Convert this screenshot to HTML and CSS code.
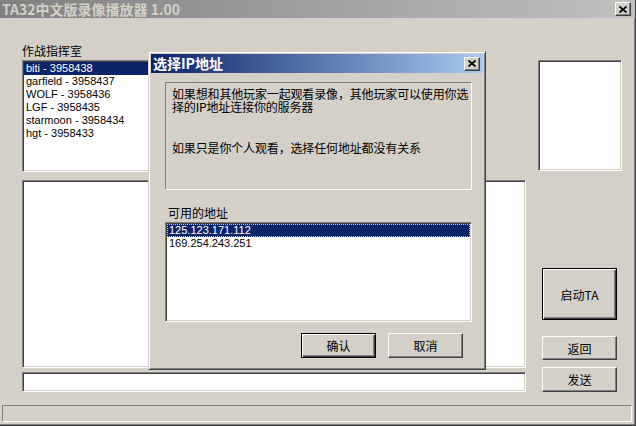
FILE: index.html
```html
<!DOCTYPE html>
<html lang="zh-CN">
<head>
<meta charset="utf-8">
<title>TA32中文版录像播放器 1.00</title>
<link rel="stylesheet" href="styles.css">
</head>
<body>
<div class="window">
  <div class="titlebar">
    <div class="title">TA32中文版录像播放器 1.00</div>
    <div class="tbtn">
      <svg width="8" height="7" viewBox="0 0 8 7"><path d="M0.5 0.5 L7.5 6.5 M7.5 0.5 L0.5 6.5" stroke="#000" stroke-width="1.7" fill="none"/></svg>
    </div>
  </div>
  <div class="client">
    <div class="leftcol">
      <div class="label">作战指挥室</div>
      <div class="sunken list1">
        <div class="item sel">biti - 3958438</div>
        <div class="item">garfield - 3958437</div>
        <div class="item">WOLF - 3958436</div>
        <div class="item">LGF - 3958435</div>
        <div class="item">starmoon - 3958434</div>
        <div class="item">hgt - 3958433</div>
      </div>
      <div class="sunken list2"></div>
      <div class="sunken input"></div>
    </div>
    <div class="rightcol">
      <div class="sunken preview"></div>
      <div class="btn default btn-start">启动TA</div>
      <div class="btn btn-back">返回</div>
      <div class="btn btn-send">发送</div>
    </div>
  </div>
  <div class="status"></div>

  <div class="dialog">
    <div class="dtitle">
      <span class="dtitle-text">选择IP地址</span>
      <div class="tbtn">
        <svg width="8" height="7" viewBox="0 0 8 7"><path d="M0.5 0.5 L7.5 6.5 M7.5 0.5 L0.5 6.5" stroke="#000" stroke-width="1.7" fill="none"/></svg>
      </div>
    </div>
    <div class="dbody">
      <div class="infobox">
        <p class="para">如果想和其他玩家一起观看录像，其他玩家可以使用你选<br>择的IP地址连接你的服务器</p>
        <p class="para para2">如果只是你个人观看，选择任何地址都没有关系</p>
      </div>
      <div class="dlabel">可用的地址</div>
      <div class="sunken dlist">
        <div class="item sel focus">125.123.171.112</div>
        <div class="item">169.254.243.251</div>
      </div>
      <div class="dbuttons">
        <div class="btn default dbtn">确认</div>
        <div class="btn dbtn">取消</div>
      </div>
    </div>
  </div>
</div>
</body>
</html>
```
FILE: styles.css
```css
* { box-sizing: border-box; }
html, body { margin: 0; padding: 0; }
body {
  width: 636px;
  height: 426px;
  overflow: hidden;
  background: #d4d0c8;
  font-family: "Noto Sans CJK SC", "Liberation Sans", sans-serif;
  font-size: 12px;
  color: #000;
}
.window {
  position: relative;
  width: 636px;
  height: 426px;
  border-right: 1px solid #404040;
  border-bottom: 1px solid #404040;
  box-shadow: inset -1px -1px #808080;
  display: flex;
  flex-direction: column;
}
.titlebar {
  flex: none;
  height: 18px;
  background: linear-gradient(to right, #808080, #c0c0c0);
  display: flex;
  align-items: center;
  padding: 0 4px 0 2px;
}
.title {
  flex: 1;
  color: #d4d0c8;
  font-weight: bold;
  font-size: 14px;
  line-height: 18px;
  white-space: nowrap;
}
.tbtn {
  flex: none;
  width: 16px;
  height: 14px;
  background: #d4d0c8;
  border: 1px solid;
  border-color: #fff #404040 #404040 #fff;
  box-shadow: inset -1px -1px #808080;
  display: flex;
  align-items: center;
  justify-content: center;
}
.tbtn svg { display: block; }
.client {
  flex: 1;
  min-height: 0;
  display: grid;
  grid-template-columns: 504px 83px;
  column-gap: 13px;
  padding: 26px 0 13px 22px;
}
.leftcol { display: flex; flex-direction: column; }
.label { height: 14px; line-height: 14px; margin-bottom: 2px; white-space: nowrap; }
.sunken {
  background: #fff;
  border: 1px solid;
  border-color: #808080 #fff #fff #808080;
  box-shadow: inset 1px 1px #404040, inset -1px -1px #d4d0c8;
  padding: 1px;
}
.list1 { width: 250px; height: 112px; margin-bottom: 8px; }
.list2 { height: 188px; margin-bottom: 4px; }
.input { height: 20px; }
.item {
  height: 13px;
  line-height: 13px;
  font-family: "Liberation Sans", sans-serif;
  font-size: 11px;
  padding-left: 2px;
  white-space: nowrap;
}
.item.sel { background: #0a246a; color: #fff; }
.item.focus { outline: 1px dotted #c8c8c8; outline-offset: -1px; }
.rightcol {
  display: flex;
  flex-direction: column;
  align-items: flex-start;
  padding-top: 16px;
}
.preview { width: 84px; height: 111px; margin-bottom: 97px; margin-left: -1px; }
.btn {
  width: 75px;
  background: #d4d0c8;
  border: 1px solid;
  border-color: #fff #404040 #404040 #fff;
  box-shadow: inset -1px -1px #808080;
  display: flex;
  align-items: center;
  justify-content: center;
  font-size: 12px;
  white-space: nowrap;
}
.btn.default {
  border: 1px solid #000;
  box-shadow: inset 1px 1px #fff, inset -1px -1px #404040, inset -2px -2px #808080;
}
.btn-start { margin-left: 3px; height: 52px; margin-bottom: 16px; }
.btn-back { margin-left: 3px; height: 24px; margin-bottom: 7px; }
.btn-send { margin-left: 3px; height: 25px; }
.status {
  flex: none;
  height: 17px;
  margin: 0 3px 3px 2px;
  border: 1px solid;
  border-color: #808080 #fff #fff #808080;
}
.dialog {
  position: absolute;
  left: 148px;
  top: 51px;
  width: 338px;
  height: 319px;
  background: #d4d0c8;
  border: 1px solid;
  border-color: #d4d0c8 #404040 #404040 #d4d0c8;
  box-shadow: inset 1px 1px #fff, inset -1px -1px #808080;
  padding: 2px;
  display: flex;
  flex-direction: column;
}
.dtitle {
  flex: none;
  height: 19px;
  background: linear-gradient(to right, #0a246a, #a6caf0);
  display: flex;
  align-items: center;
  padding: 0 3px 0 2px;
}
.dtitle-text {
  flex: 1;
  color: #fff;
  font-weight: bold;
  font-size: 14px;
  line-height: 19px;
  white-space: nowrap;
}
.dbody { flex: 1; display: flex; flex-direction: column; }
.infobox {
  margin: 9px 0 0 14px;
  width: 307px;
  height: 108px;
  border: 1px solid;
  border-color: #808080 #fff #fff #808080;
  padding: 4px 0 0 6px;
}
.para { margin: 0; line-height: 13px; white-space: nowrap; letter-spacing: -0.15px; }
.para2 { margin-top: 28px; }
.dlabel { margin: 16px 0 0 17px; height: 14px; line-height: 14px; }
.dlist { margin: 2px 0 0 14px; width: 307px; height: 100px; }
.dbuttons {
  margin-top: 11px;
  display: flex;
  justify-content: flex-end;
  gap: 12px;
  padding-right: 20px;
}
.dbtn { height: 25px; }
```
